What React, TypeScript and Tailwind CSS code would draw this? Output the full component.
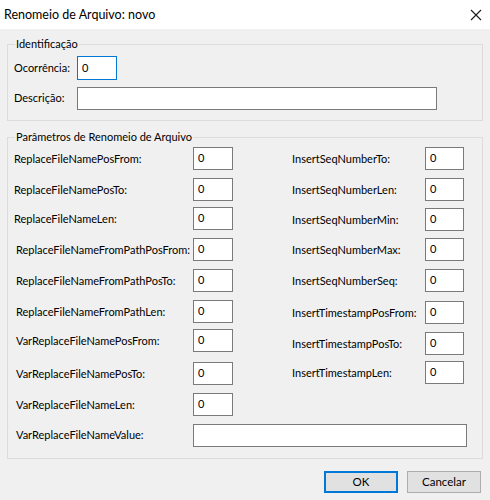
import React from 'react';

type Field = { label: string; value: string; mt: string; lx?: string };

const leftFields: Field[] = [
  { label: 'ReplaceFileNamePosFrom:', value: '0', mt: 'mt-[9px]' },
  { label: 'ReplaceFileNamePosTo:', value: '0', mt: 'mt-[8px]' },
  { label: 'ReplaceFileNameLen:', value: '0', mt: 'mt-[6px]' },
  { label: 'ReplaceFileNameFromPathPosFrom:', value: '0', mt: 'mt-[8px]', lx: 'pl-[2px]' },
  { label: 'ReplaceFileNameFromPathPosTo:', value: '0', mt: 'mt-[8px]', lx: 'pl-[2px]' },
  { label: 'ReplaceFileNameFromPathLen:', value: '0', mt: 'mt-[8px]', lx: 'pl-[2px]' },
  { label: 'VarReplaceFileNamePosFrom:', value: '0', mt: 'mt-[6px]', lx: 'pl-[2px]' },
  { label: 'VarReplaceFileNamePosTo:', value: '0', mt: 'mt-[10px]', lx: 'pl-[2px]' },
  { label: 'VarReplaceFileNameLen:', value: '0', mt: 'mt-[8px]', lx: 'pl-[2px]' },
];

const rightFields: Field[] = [
  { label: 'InsertSeqNumberTo:', value: '0', mt: 'mt-[9px]' },
  { label: 'InsertSeqNumberLen:', value: '0', mt: 'mt-[8px]' },
  { label: 'InsertSeqNumberMin:', value: '0', mt: 'mt-[7px]' },
  { label: 'InsertSeqNumberMax:', value: '0', mt: 'mt-[7px]' },
  { label: 'InsertSeqNumberSeq:', value: '0', mt: 'mt-[8px]' },
  { label: 'InsertTimestampPosFrom:', value: '0', mt: 'mt-[9px]' },
  { label: 'InsertTimestampPosTo:', value: '0', mt: 'mt-[8px]' },
  { label: 'InsertTimestampLen:', value: '0', mt: 'mt-[6px]' },
];

const TextBox = ({ value, className }: { value: string; className: string }) => (
  <div className={`shrink-0 h-[23px] bg-white border border-[#7a7a7a] pl-[4px] pt-[2px] leading-[16px] ${className}`}>{value}</div>
);

const App: React.FC = () => {
  return (
    <div className="w-[490px] h-[500px] bg-[#f0f0f0] text-[11px] text-black overflow-hidden" style={{ fontFamily: 'Lato, "Noto Sans", Arial, sans-serif' }}>
      {/* title bar */}
      <div className="h-[29px] bg-white flex items-center justify-between pl-[4px] pr-[7px]">
        <span className="text-[12.5px] pt-[1px]">Renomeio de Arquivo: novo</span>
        <svg width="12" height="12" viewBox="0 0 12 12" className="mr-[1px]">
          <path d="M1 1 L11 11 M11 1 L1 11" stroke="#1a1a1a" strokeWidth="1.1" fill="none" />
        </svg>
      </div>

      {/* Identificação */}
      <div className="relative mx-[7px] mt-[15px] h-[77px] border border-[#dcdcdc] pt-[11px] pl-[6px]">
        <span className="absolute left-[7px] top-[-9px] bg-[#f0f0f0] px-[1px] leading-[16px]">Identificação</span>
        <div className="flex items-center">
          <span className="w-[63px] whitespace-nowrap">Ocorrência:</span>
          <div className="w-[40px] h-[24px] bg-white border border-[#0078d7] pl-[4px] pt-[3px] leading-[16px]">0</div>
        </div>
        <div className="flex items-center mt-[7px]">
          <span className="w-[63px] whitespace-nowrap">Descrição:</span>
          <TextBox value="" className="w-[360px]" />
        </div>
      </div>

      {/* Parâmetros */}
      <div className="relative mx-[7px] mt-[16px] h-[322px] border border-[#dcdcdc] pl-[6px]">
        <span className="absolute left-[7px] top-[-9px] bg-[#f0f0f0] px-[1px] leading-[16px]">Parâmetros de Renomeio de Arquivo</span>
        <div className="flex">
          <div className="flex flex-col w-[278px]">
            {leftFields.map((f) => (
              <div key={f.label} className={`flex items-center ${f.mt}`}>
                <span className={`w-[179px] whitespace-nowrap pt-[2px] ${f.lx ?? ''}`}>{f.label}</span>
                <TextBox value={f.value} className="w-[40px]" />
              </div>
            ))}
          </div>
          <div className="flex flex-col">
            {rightFields.map((f) => (
              <div key={f.label} className={`flex items-center ${f.mt}`}>
                <span className="w-[133px] whitespace-nowrap pt-[1px]">{f.label}</span>
                <TextBox value={f.value} className="w-[39px]" />
              </div>
            ))}
          </div>
        </div>
        <div className="flex items-center mt-[8px]">
          <span className="w-[179px] whitespace-nowrap pl-[2px]">VarReplaceFileNameValue:</span>
          <TextBox value="" className="w-[274px]" />
        </div>
      </div>

      {/* buttons */}
      <div className="flex justify-end gap-[9px] mt-[12px] pr-[9px]">
        <button className="w-[74px] h-[22px] bg-[#e1e1e1] border-2 border-[#0078d7] leading-[16px] text-[11.5px]">OK</button>
        <button className="w-[74px] h-[22px] bg-[#e1e1e1] border border-[#adadad] leading-[16px] text-[11.5px]">Cancelar</button>
      </div>
    </div>
  );
};

export default App;
